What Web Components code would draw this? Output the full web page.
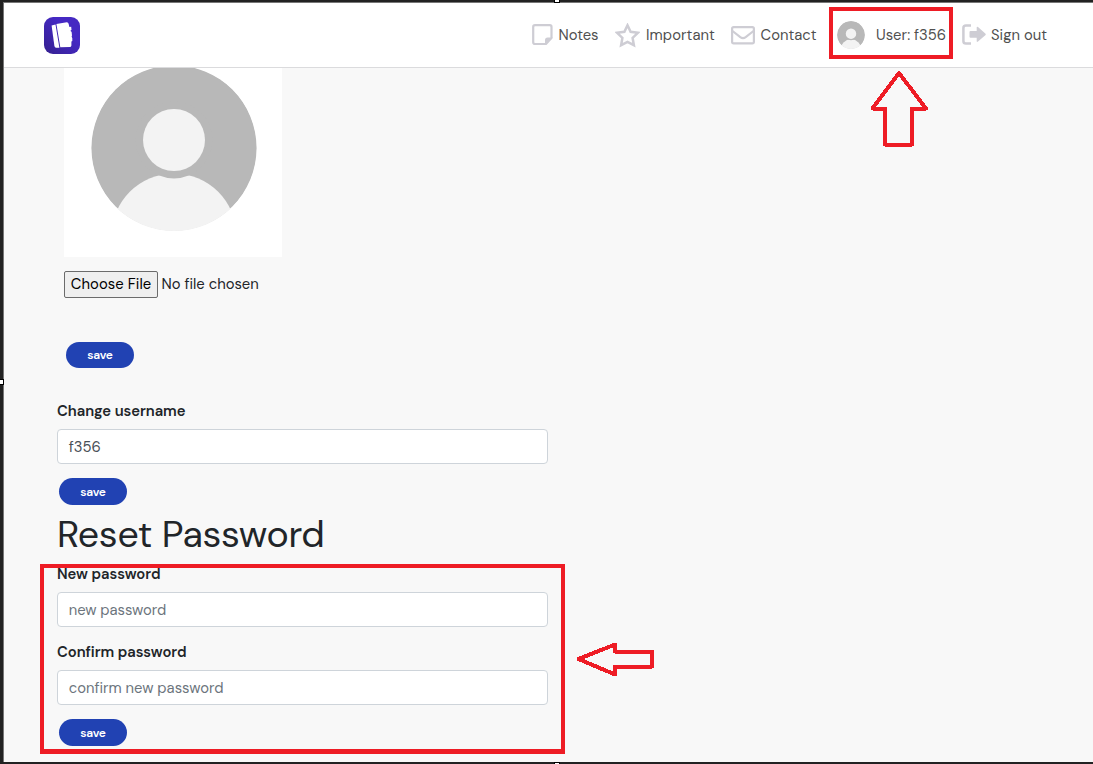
<!DOCTYPE html>
<html lang="en">
<head>
<meta charset="utf-8">
<title>Profile settings</title>
<style>
html,body{margin:0;height:100%;overflow:hidden}
body{font-family:"DM Sans",Inter,"Liberation Sans",sans-serif;font-size:14.8px;font-variation-settings:"opsz" 14;color:#212529}
</style>
</head>
<body>
<settings-page></settings-page>
<script>
const define = (name, html, ready) => customElements.define(name, class extends HTMLElement {
  connectedCallback() {
    if (this.shadowRoot) return;
    const t = document.createElement('template');
    t.innerHTML = html;
    this.attachShadow({ mode: 'open' }).append(t.content.cloneNode(true));
    if (ready) ready.call(this, this.shadowRoot);
  }
});

/* One line of text tracked to a given measure. */
define('tracked-text', `<style>:host{display:inline-block;white-space:nowrap}span{display:inline-block}</style><span><slot></slot></span>`, function (root) {
  const s = root.querySelector('span'), w = +this.getAttribute('w');
  const n = this.textContent.length;
  s.style.letterSpacing = (w - s.getBoundingClientRect().width) / n + 'px';
  this.style.width = w + 'px';
});

define('user-avatar', `<style>:host{display:block}svg{display:block;width:100%;height:100%}</style>
<svg viewBox="0 0 166 166"><defs><clipPath id="c"><circle cx="83" cy="83" r="83"/></clipPath></defs>
<g clip-path="url(#c)"><circle cx="83" cy="83" r="82.6" fill="#b8b8b8"/><circle cx="83" cy="171" r="62.5" fill="#f3f3f3"/><circle cx="83" cy="75" r="38.5" fill="#b8b8b8"/><circle cx="83" cy="75" r="31" fill="#f3f3f3"/></g></svg>`);

define('app-logo', `<style>:host{display:block;width:36px;height:37px}svg{display:block}</style>
<svg width="36" height="37" viewBox="0 0 36 37"><defs><linearGradient id="g" x1="0" y1="1" x2="1" y2="0"><stop offset="0" stop-color="#35208f"/><stop offset=".65" stop-color="#4529c4"/><stop offset="1" stop-color="#4529c0"/></linearGradient></defs>
<rect width="36" height="37" rx="9" fill="url(#g)"/>
<path d="M7.6 8.6 11.5 7.4 15.4 30.8H12.1Q10.8 30.8 10.4 29Z" fill="#fff"/>
<path d="M12.4 7.1 22.8 5.3Q24.2 5.2 24.6 6.8L25.4 10 27.2 9.7 27.5 13 26.6 13.2 26.9 14.6 27.6 14.7 28 18.6 27.6 19.4 28.3 21.3 28.3 24 27.4 24.6V28.5Q27.3 30 25.7 30L16.3 30.3Z" fill="#fff"/></svg>`);

const icons = {
  note: '<svg width="21" height="22" viewBox="0 0 21 22"><path d="M13.5 20H3Q1.2 20 1.2 18.3V2.9Q1.2 1.2 3 1.2H17.8Q19.5 1.2 19.5 2.9V14" fill="none" stroke="#cecdd4" stroke-width="2.2"/><path d="M13 21V16Q13 13.5 15.5 13.5H20.5V14.5L14.5 21Z" fill="#cecdd4"/></svg>',
  star: '<svg width="25" height="25" viewBox="0 0 25 25"><path d="M12.5 2.3 15.6 8.8 22.9 9.8 17.6 14.9 18.9 22.2 12.5 18.8 6.1 22.2 7.4 14.9 2.1 9.8 9.4 8.8Z" fill="none" stroke="#cecdd4" stroke-width="2.5"/></svg>',
  mail: '<svg width="24" height="19" viewBox="0 0 24 19"><rect x="1.1" y="1.1" width="21.8" height="16.3" rx="1.6" fill="none" stroke="#cecdd4" stroke-width="2.2"/><path d="M1.5 5 9.3 11.2Q12 13.2 14.7 11.2L22.5 5" fill="none" stroke="#cecdd4" stroke-width="2.2"/></svg>',
  exit: '<svg width="24" height="22" viewBox="0 0 24 22"><path d="M9 1.5H4Q1.4 1.5 1.4 4V17Q1.4 19.6 4 19.6H9" fill="none" stroke="#cecdd4" stroke-width="2.5"/><path d="M7.5 8Q7.5 7 8.6 7H14.7V3.6Q14.7 2.2 16 3.1L23.3 9.4Q24.2 10.4 23.3 11.3L16 17.5Q14.7 18.5 14.7 17V13.8H8.6Q7.5 13.8 7.5 12.7Z" fill="#cecdd4"/></svg>',
  user: '<user-avatar style="width:28px;height:28px"></user-avatar>'
};
define('nav-link', `<style>:host{display:flex;align-items:center;height:28px;color:#505050}i{display:flex;flex:none}</style><i></i><slot></slot>`, function (root) {
  const i = root.querySelector('i');
  i.innerHTML = icons[this.getAttribute('icon')];
  i.style.width = this.getAttribute('lead') + 'px';
});

define('top-bar', `<style>
:host{display:flex;box-sizing:border-box;height:65px;background:#fff;border-bottom:1px solid #dbdbdd;padding:0 46px 0 41px;align-items:center;justify-content:space-between}
nav{display:flex;align-items:center;gap:16px}nav tracked-text{margin-top:-1px}
.user{margin:0 0 0 4px}</style>
<app-logo></app-logo>
<nav>
<nav-link icon="note" lead="26.5"><tracked-text w="40">Notes</tracked-text></nav-link>
<nav-link icon="star" lead="31.5"><tracked-text w="69">Important</tracked-text></nav-link>
<nav-link icon="mail" lead="29.5"><tracked-text w="56">Contact</tracked-text></nav-link>
<nav-link class="user" icon="user" lead="39.5"><tracked-text w="70">User: f356</tracked-text></nav-link>
<nav-link icon="exit" lead="29"><tracked-text w="56">Sign out</tracked-text></nav-link>
</nav>`);

define('save-button', `<style>:host{display:flex;box-sizing:border-box;width:68px;height:27px;border-radius:14px;background:#2142b3;color:#fff;font-size:12px;font-weight:600;align-items:center;justify-content:center}</style><tracked-text w="25.5">save</tracked-text>`);

define('form-field', `<style>:host{display:block;width:491px}
label{display:flex;align-items:center;height:20px;font-weight:600;margin-bottom:8px}
div{box-sizing:border-box;height:35px;border:1px solid #ced4da;border-radius:4px;background:#fff;padding:0 10.7px;display:flex;align-items:center;color:#495057}
:host([hint]) div{color:#6c757d}</style>
<label><slot name="label"></slot></label><div><slot></slot></div>`);

define('file-picker', `<style>:host{display:flex;align-items:center;height:27px;gap:3.5px}
b{box-sizing:border-box;width:94px;height:27px;border:1px solid #6b6b6b;border-radius:2px;background:#efefef;color:#000;font-weight:400;display:flex;align-items:center;justify-content:center}tracked-text{margin-top:-1px}</style>
<b><tracked-text w="80.5">Choose File</tracked-text></b><tracked-text w="97">No file chosen</tracked-text>`);

define('red-marks', `<style>:host{position:absolute;inset:0;pointer-events:none}svg{display:block}</style>
<svg width="1093" height="764" viewBox="0 0 1093 764" fill="none" stroke="#ee1c25" stroke-width="4" shape-rendering="crispEdges">
<rect x="831" y="9" width="120" height="48"/>
<path d="M42 566H563V751.5H42Z"/><path d="M40 751.5H565" stroke-width="5"/>
<path d="M899 73 926 108.5H912V144.5H885V108.5H872.5Z" stroke-linejoin="round"/>
<path d="M578.5 659 615 644.5V651.5H652V666.5H615V674.5Z" stroke-linejoin="round"/></svg>`);

define('window-frame', `<style>:host{position:absolute;inset:0;pointer-events:none}svg{display:block}</style>
<svg width="1093" height="764" viewBox="0 0 1093 764" shape-rendering="crispEdges">
<path d="M0 0H1093V2H3V762H1093V764H0Z" fill="#222"/><path d="M3 762V2H1093V3H4V762Z" fill="#777"/>
<path d="M554 0H560V3H554ZM0 379H4V385H0ZM554 762H560V764H554Z" fill="#000"/><path d="M555 0H559V2H555ZM0 380H3V384H0ZM555 763H559V764H555Z" fill="#fff"/></svg>`);

define('settings-page', `<style>
:host{display:block;position:relative;box-sizing:border-box;width:1093px;height:764px;padding:3px 0 2px 3px;background:#f8f8f8;overflow:hidden}
main{display:flex;flex-direction:column;align-items:flex-start;padding-left:54px}
.photo{width:218px;height:189px;margin-left:7px;background:#fff;overflow:hidden;display:flex;justify-content:center}
.photo user-avatar{flex:none;width:166px;height:166px;margin:-3.5px 0 0 1px}
file-picker{margin:14px 0 44px 7px}
.first{margin-left:9px;height:26px;margin-bottom:33px}
.save{margin:14px 0 0 2px}
h1{font-size:37.5px;line-height:40px;font-weight:420;margin:10px 0 9px;height:40px;display:flex}
.gap{margin-top:15px}
</style>
<top-bar></top-bar>
<main>
<div class="photo"><user-avatar></user-avatar></div>
<file-picker></file-picker>
<save-button class="first"></save-button>
<form-field><tracked-text slot="label" w="128.5">Change username</tracked-text><tracked-text w="32">f356</tracked-text></form-field>
<save-button class="save"></save-button>
<h1><tracked-text w="267.5">Reset Password</tracked-text></h1>
<form-field hint><tracked-text slot="label" w="103.5">New password</tracked-text><tracked-text w="97.5">new password</tracked-text></form-field>
<form-field hint class="gap"><tracked-text slot="label" w="129">Confirm password</tracked-text><tracked-text w="154.5">confirm new password</tracked-text></form-field>
<save-button class="save"></save-button>
</main>
<red-marks></red-marks><window-frame></window-frame>`);
</script>
</body>
</html>
